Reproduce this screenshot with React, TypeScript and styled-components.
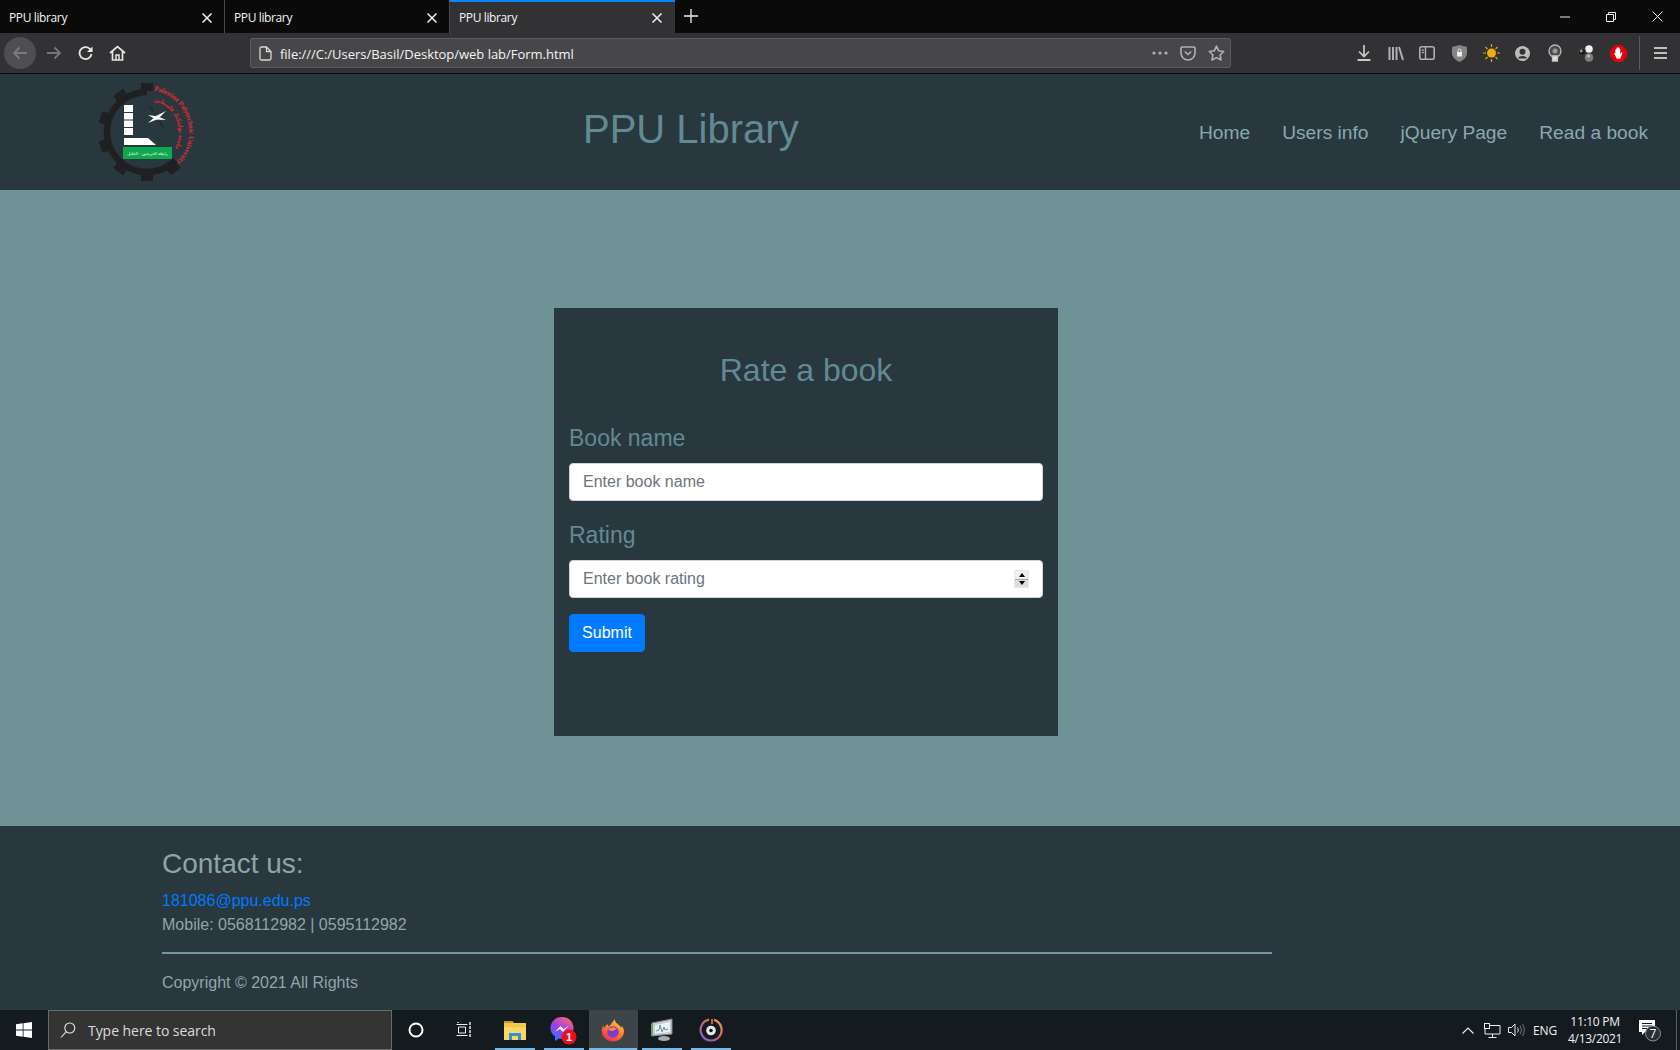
import React from 'react';
import styled, { createGlobalStyle } from 'styled-components';

const Global = createGlobalStyle`
  html, body { margin: 0; padding: 0; height: 100%; background: #6f9297; overflow: hidden; }
  * { box-sizing: border-box; }
`;

const Screen = styled.div`
  width: 1680px; height: 1050px; display: flex; flex-direction: column; overflow: hidden;
  font-family: "Liberation Sans", Arial, sans-serif; font-size: 16px;
`;

/* Browser chrome */
const TabStrip = styled.div`
  height: 33px; flex: none; background: #0a0a0b; display: flex; align-items: stretch;
`;
const Tab = styled.div<{ $active?: boolean; $divider?: boolean }>`
  width: 225px; display: flex; align-items: center; padding: ${p => (p.$active ? '0 13px 0 9px' : '2px 12px 0 9px')};
  color: #f5f5f5; font: 12px "Open Sans", sans-serif; letter-spacing: -0.38px;
  background: ${p => (p.$active ? '#323234' : 'transparent')};
  border-top: ${p => (p.$active ? '2px solid #0a84ff' : 'none')};
  border-right: ${p => (p.$divider ? '1px solid #4a4a4d' : 'none')};
`;
const TabTitle = styled.span`flex: 1; padding-bottom: 1px;`;
const NewTab = styled.div`width: 32px; display: flex; align-items: center; justify-content: center; padding-bottom: 2px;`;
const StripSpacer = styled.div`flex: 1;`;
const WinButton = styled.div`width: 46px; display: flex; align-items: center; justify-content: center;`;

const Toolbar = styled.div`
  height: 41px; flex: none; background: #323234; border-bottom: 1px solid #0c0c0d;
  display: flex; align-items: center; padding-left: 4px;
`;
const BackCircle = styled.div`
  width: 32px; height: 32px; border-radius: 50%; background: #4f4f52; display: flex; align-items: center; justify-content: center;
  margin-right: 1px; flex: none;
`;
const NavSlot = styled.div<{ $wide?: boolean }>`
  width: ${p => (p.$wide ? '33px' : '32px')}; height: 32px; display: flex; align-items: center; justify-content: center; flex: none;
`;
const HomeSlot = styled(NavSlot)`padding-right: 2px;`;
const UrlBar = styled.div`
  margin-left: 116px; width: 981px; height: 30px; background: #474749; border: 1px solid #5c5c5f; border-radius: 2px; flex: none;
  display: flex; align-items: center; padding-left: 8px; color: #f4f4f4; font: 13px "Open Sans", sans-serif;
`;
const UrlText = styled.span`flex: 1; margin-left: 8px; padding-top: 1px; letter-spacing: -0.02px;`;
const UrlIcon = styled.div`width: 28px; display: flex; align-items: center; justify-content: center; flex: none;`;
const ToolIcons = styled.div`margin-left: 117px; display: flex; align-items: center; flex: none;`;
const ToolIcon = styled.div`width: 31.8px; height: 32px; display: flex; align-items: center; justify-content: center; flex: none;`;
const ToolSep = styled.div`width: 1px; height: 34px; background: #5a5a5d; margin: 0 0 0 5px;`;
const MenuSlot = styled.div`width: 40px; display: flex; align-items: center; padding-left: 14px;`;

/* Page header */
const Header = styled.header`
  height: 116px; flex: none; background: #29373f; display: flex; align-items: center; padding: 0 32px 0 98px;
`;
const Logo = styled.svg`width: 100px; height: 100px; flex: none; overflow: visible;`;
const Brand = styled.h1`
  margin: 0 0 0 385px; font-size: 40px; font-weight: 400; line-height: 48px; color: #618a93; padding-bottom: 7px;
`;
const Nav = styled.nav`margin-left: auto; display: flex; gap: 32px;`;
const NavLink = styled.a`font-size: 19.2px; line-height: 29px; color: #8aa9ae; text-decoration: none;`;

/* Main */
const Main = styled.main`
  height: 636px; flex: none; background: #6f9297; padding: 118px 0 0 554px;
`;
const Card = styled.form`
  width: 504px; height: 428px; background: #29373f; padding: 43px 15px 0 15px; margin: 0;
`;
const CardTitle = styled.h2`
  margin: 0 0 31px; font-size: 32px; font-weight: 400; line-height: 38px; text-align: center; color: #618a93;
`;
const Field = styled.div`margin-bottom: 16px;`;
const FieldLabel = styled.label`
  display: block; font-size: 23px; line-height: 35px; color: #618a93; padding-top: 1px; margin-bottom: 7px;
`;
const InputBox = styled.div`
  height: 38px; background: #fff; border: 1px solid #ced4da; border-radius: 4px; display: flex; align-items: center;
  padding: 0 13px 0 13px; color: #6c757d; font-size: 16px; line-height: 24px;
`;
const Placeholder = styled.span`flex: 1;`;
const Spinner = styled.div`
  width: 15px; height: 18px; background: #e4e4e4; border: 1px solid #e9e9e9; display: flex; flex-direction: column;
`;
const SpinPart = styled.div<{ $up?: boolean }>`
  flex: 1; display: flex; align-items: center; justify-content: center; background: ${p => (p.$up ? '#efefef' : '#dedede')};
  border-top: ${p => (p.$up ? 'none' : '1px solid #a8a8a8')};
`;
const Arrow = styled.div<{ $up?: boolean }>`
  width: 0; height: 0; border-left: 3.5px solid transparent; border-right: 3.5px solid transparent;
  ${p => (p.$up ? 'border-bottom: 4px solid #000;' : 'border-top: 4px solid #000;')}
`;
const SubmitButton = styled.button`
  width: 76px; height: 38px; padding: 0; background: #007bff; color: #fff; border: 1px solid #007bff; border-radius: 4px;
  font: 16px "Liberation Sans", Arial, sans-serif; display: block;
`;

/* Footer */
const Footer = styled.footer`
  height: 184px; flex: none; background: #29373f; padding: 21px 0 0 162px; color: #93a6a7;
`;
const FooterInner = styled.div`width: 1110px;`;
const FooterTitle = styled.h3`margin: 0 0 8px; font-size: 28px; font-weight: 400; line-height: 33.6px; color: #8ea5a5;`;
const FooterLine = styled.div`line-height: 24px;`;
const Email = styled.a`color: #007bff; text-decoration: none;`;
const Rule = styled.hr`border: 0; border-top: 2px solid #76989c; margin: 15px 0 17px; height: 0;`;

/* Taskbar */
const Taskbar = styled.div`
  height: 40px; flex: none; background: #141b1f; display: flex; align-items: stretch; color: #f2f2f2;
`;
const StartButton = styled.div`width: 48px; display: flex; align-items: center; justify-content: center;`;
const SearchBox = styled.div`
  width: 344px; background: #343434; border: 1px solid #6a6a6a; display: flex; align-items: center;
  padding-left: 11px; font: 14px "Open Sans", sans-serif; color: #dcdcdc; letter-spacing: -0.05px;
`;
const SearchText = styled.span`margin-left: 12px;`;
const SystemSlot = styled.div`width: 48px; display: flex; align-items: center; justify-content: center; flex: none;`;
const AppGroup = styled.div`display: flex; align-items: stretch; margin-left: 3px;`;
const AppSlot = styled.div<{ $active?: boolean }>`
  width: 49px; flex: none; position: relative; display: flex; align-items: center; justify-content: center;
  padding-right: 2px;
  background: ${p => (p.$active ? '#3e4549' : 'transparent')};
  &::after {
    content: ''; position: absolute; bottom: 0; height: 2px; background: #76b9ed;
    left: ${p => (p.$active ? '0' : '4px')}; right: ${p => (p.$active ? '1px' : '5px')};
  }
`;
const TrayArea = styled.div`margin-left: auto; display: flex; align-items: center; padding-right: 3px;`;
const TrayIcon = styled.div`width: 24px; display: flex; align-items: center; justify-content: center; flex: none;`;
const Lang = styled.div`font: 12px "Open Sans", sans-serif; width: 34px; text-align: center; letter-spacing: -0.2px;`;
const Clock = styled.div`
  width: 54px; text-align: center; font: 12px/17px "Open Sans", sans-serif; margin-left: 6px; letter-spacing: -0.3px; white-space: nowrap;
`;
const Notify = styled.div`width: 40px; margin-left: 8px; display: flex; align-items: center; justify-content: center;`;
const DesktopPeek = styled.div`width: 1px; height: 100%; background: #5b6064; margin-left: 6px;`;

const C = '#b1b1b3';
const GEAR = '#201f22';

const CloseX = ({ c = '#f0f0f0', s = 10 }: { c?: string; s?: number }) => (
  <svg width={s} height={s} viewBox="0 0 10 10"><path d="M.5.5l9 9M9.5.5l-9 9" stroke={c} strokeWidth="1.5" fill="none" /></svg>
);

const LogoMark = () => (
  <Logo viewBox="0 0 100 100">
    <defs>
      <path id="outerArc" d="M56.300 8.600 A42 42 0 0 1 78.700 79.700" />
      <path id="innerArc" d="M55.800 19 A32 32 0 0 1 75.200 68.500" />
    </defs>
    <path d="M77.300 78.300 A40 40 0 1 1 49 10" fill="none" stroke={GEAR} strokeWidth="6.500" />
    {[0, 324, 288, 252, 216, 180, 144].map(a => (
      <rect key={a} x="43" y="1" width="12" height="8" fill={GEAR} transform={`rotate(${a} 49 50)`} />
    ))}
    <text fontSize="6.800" fontFamily="'Liberation Serif', serif" fontWeight="700" fill="#ee2a30">
      <textPath href="#outerArc" textLength="92" lengthAdjust="spacingAndGlyphs">Palestine Polytechnic University</textPath>
    </text>
    <text fontSize="6" fontFamily="'DejaVu Sans', sans-serif" fontWeight="700" fill="#e0262c">
      <textPath href="#innerArc" textLength="60" lengthAdjust="spacingAndGlyphs">جامعة بوليتكنك فلسطين</textPath>
    </text>
    <rect x="26" y="23" width="9" height="7" fill="#fff" />
    <rect x="26" y="31" width="9" height="6.500" fill="#fff" />
    <rect x="26" y="38.500" width="9" height="6.500" fill="#fff" />
    <rect x="26" y="46" width="9" height="7" fill="#fff" />
    <path d="M26 56 H50 L58 63 H26 Z" fill="#fff" />
    <path d="M50 41 L58 34 L68 29 L60 37 Z" fill="#fff" />
    <path d="M50 33 L60 34.500 L68 38 L58 37.500 Z" fill="#fff" />
    <path d="M51 24 l4 4 -2 0 4 4" stroke="#1f2326" strokeWidth="1" fill="none" />
    <path d="M61 39 l3 3 -2 0 4 4" stroke="#1f2326" strokeWidth="1" fill="none" />
    <rect x="25" y="65" width="49" height="12" fill="#0da84f" />
    <text x="49.500" y="72.800" fontSize="4" textAnchor="middle" fontFamily="'DejaVu Sans', sans-serif" fill="#fff">رابطة الخريجين - الخليل</text>
  </Logo>
);

const FirefoxIcon = () => (
  <svg width="24" height="24" viewBox="0 0 24 24">
    <defs>
      <linearGradient id="ff" x1="0.8" y1="0" x2="0.2" y2="1"><stop offset="0" stopColor="#ffd23a" /><stop offset=".5" stopColor="#ff7a2a" /><stop offset="1" stopColor="#f0264f" /></linearGradient>
    </defs>
    <path d="M14 1c-.5 3 2 4.500 4.500 6.500 .5 .5 1 1.500 1.500 2 .5 -.5 .8 -1 .8 -1.500 1.500 2 2.200 3.500 2.200 5 0 6 -5 10.500 -11 10.500S.8 19 .8 13c0 -2 .5 -4 1.700 -5.500 0 1 .5 2 1 2.500 .5 -2 1.500 -3.500 3.500 -3.800 0 1.500 1 2.300 1 2.300L14 1z" fill="url(#ff)" />
    <circle cx="12" cy="14" r="5.800" fill="#7c3bd1" />
    <path d="M7 11.500c2 -2.500 7 -3 9.500 0 -3 -1 -3 1.500 -5 1.500 -1.500 0 -3 -1 -4.500 -1.500z" fill="#ff8a2a" />
  </svg>
);

const MessengerIcon = () => (
  <svg width="30" height="32" viewBox="0 0 30 32">
    <defs>
      <linearGradient id="ms" x1="0.2" y1="1" x2="0.8" y2="0"><stop offset="0" stopColor="#2a7bff" /><stop offset=".5" stopColor="#a33bea" /><stop offset="1" stopColor="#ff6a6a" /></linearGradient>
    </defs>
    <path d="M13 3c6.500 0 11.500 4.800 11.500 11S19.500 25 13 25c-1 0 -2 -.2 -3 -.5L6 27v-4.500C3 20.500 1.500 17.500 1.500 14 1.500 7.800 6.500 3 13 3z" fill="url(#ms)" />
    <path d="M6 18l5.500 -6 3 3 5 -3 -5.500 6 -3 -3z" fill="#fff" />
    <circle cx="20" cy="23" r="7.500" fill="#ef0b1e" />
    <text x="20" y="27" fontSize="11" fontWeight="700" textAnchor="middle" fill="#fff" fontFamily="'Liberation Sans', sans-serif">1</text>
  </svg>
);

const MonitorIcon = () => (
  <svg width="24" height="24" viewBox="0 0 24 24">
    <path d="M2 5 L22 1 V16 L2 18 Z" fill="#c5cbce" stroke="#7f8588" />
    <path d="M5 7 L20 4 V14 L5 15.500 Z" fill="#eef2f5" />
    <path d="M6 13 l3 -1 1 -5 2 7 2 -5 1 3 3 -1" stroke="#5f93b8" fill="none" />
    <path d="M1 6 l2 -1 v13 l-2 0z" fill="#67a860" />
    <ellipse cx="14" cy="20.500" rx="6" ry="2.500" fill="#a8acae" />
  </svg>
);

const MediaIcon = () => (
  <svg width="24" height="24" viewBox="0 0 24 24">
    <defs>
      <linearGradient id="md" x1="0" y1="1" x2="1" y2="0"><stop offset="0" stopColor="#7a5bd8" /><stop offset=".55" stopColor="#c96a6a" /><stop offset="1" stopColor="#f59a3a" /></linearGradient>
    </defs>
    <path d="M15 1.900 A10.500 10.500 0 1 1 10 1.700" fill="none" stroke="url(#md)" strokeWidth="2.200" />
    <path d="M13 1v5" stroke="#e88a4a" strokeWidth="1.500" />
    <circle cx="12" cy="12.500" r="4.800" fill="#e8e8e8" />
    <circle cx="12" cy="12.500" r="1.800" fill="#141414" />
  </svg>
);

export default function App() {
  return (
    <Screen>
      <Global />
      <TabStrip>
        <Tab $divider><TabTitle>PPU library</TabTitle><CloseX /></Tab>
        <Tab $divider><TabTitle>PPU library</TabTitle><CloseX /></Tab>
        <Tab $active><TabTitle>PPU library</TabTitle><CloseX /></Tab>
        <NewTab>
          <svg width="14" height="14" viewBox="0 0 14 14"><path d="M7 0v14M0 7h14" stroke="#f0f0f0" strokeWidth="1.300" /></svg>
        </NewTab>
        <StripSpacer />
        <WinButton><svg width="10" height="2" viewBox="0 0 10 2"><path d="M0 1h10" stroke="#eee" /></svg></WinButton>
        <WinButton>
          <svg width="10" height="10" viewBox="0 0 10 10"><path d="M.5 2.500h7v7h-7zM2.500 2.500v-2h7v7h-2" stroke="#eee" fill="none" /></svg>
        </WinButton>
        <WinButton><svg width="11" height="11" viewBox="0 0 11 11"><path d="M.5.5l10 10M10.500.5l-10 10" stroke="#eee" fill="none" /></svg></WinButton>
      </TabStrip>

      <Toolbar>
        <BackCircle>
          <svg width="16" height="14" viewBox="0 0 16 14"><path d="M15 7H2M7.500 1.500L2 7l5.500 5.500" stroke="#7c7c7e" strokeWidth="1.800" fill="none" /></svg>
        </BackCircle>
        <NavSlot $wide>
          <svg width="16" height="14" viewBox="0 0 16 14"><path d="M1 7h13M8.500 1.500L14 7l-5.500 5.500" stroke="#77777a" strokeWidth="1.800" fill="none" /></svg>
        </NavSlot>
        <NavSlot>
          <svg width="16" height="16" viewBox="0 0 16 16"><path d="M13.500 9a6 6 0 1 1-1.700-5.200L14 6" stroke="#e6e6e7" strokeWidth="1.800" fill="none" /><path d="M14.500 1.500V7H9z" fill="#e6e6e7" /></svg>
        </NavSlot>
        <HomeSlot>
          <svg width="17" height="16" viewBox="0 0 17 16"><path d="M1 8l7.500-6.500L16 8M3.500 6.500V15h10V6.500" stroke="#e6e6e7" strokeWidth="1.700" fill="none" /><path d="M7 15v-5h3v5" stroke="#e6e6e7" strokeWidth="1.500" fill="none" /></svg>
        </HomeSlot>
        <UrlBar>
          <svg width="13" height="15" viewBox="0 0 13 15"><path d="M1 2.500a1.500 1.500 0 0 1 1.500-1.500h5L12 5.500v7a1.500 1.500 0 0 1-1.500 1.500h-8A1.500 1.500 0 0 1 1 12.500zM7.500 1v4.500H12" stroke="#d7d7d8" strokeWidth="1.300" fill="none" /></svg>
          <UrlText>file:///C:/Users/Basil/Desktop/web lab/Form.html</UrlText>
          <UrlIcon>
            <svg width="16" height="4" viewBox="0 0 16 4"><circle cx="2" cy="2" r="1.600" fill={C} /><circle cx="8" cy="2" r="1.600" fill={C} /><circle cx="14" cy="2" r="1.600" fill={C} /></svg>
          </UrlIcon>
          <UrlIcon>
            <svg width="16" height="15" viewBox="0 0 16 15"><path d="M1 2a1 1 0 0 1 1-1h12a1 1 0 0 1 1 1v5a7 7 0 0 1-14 0z" stroke={C} strokeWidth="1.600" fill="none" /><path d="M4.800 5.500L8 8.500l3.200-3" stroke={C} strokeWidth="1.600" fill="none" /></svg>
          </UrlIcon>
          <UrlIcon>
            <svg width="17" height="16" viewBox="0 0 17 16"><path d="M8.500 1.200l2.200 4.600 5 .7-3.600 3.500.9 5-4.500-2.400L4 15l.9-5L1.300 6.500l5-.7z" stroke={C} strokeWidth="1.600" strokeLinejoin="round" fill="none" /></svg>
          </UrlIcon>
        </UrlBar>
        <ToolIcons>
          <ToolIcon>
            <svg width="14" height="16" viewBox="0 0 14 16"><path d="M7 0v11M2 6.500l5 5 5-5" stroke="#c9c9ca" strokeWidth="1.700" fill="none" /><path d="M.5 15h13" stroke="#c9c9ca" strokeWidth="2" /></svg>
          </ToolIcon>
          <ToolIcon>
            <svg width="16" height="15" viewBox="0 0 16 15"><path d="M1.500 1v13M5 1v13M8.500 1v13M11 1l4 13" stroke={C} strokeWidth="2" fill="none" /></svg>
          </ToolIcon>
          <ToolIcon>
            <svg width="16" height="14" viewBox="0 0 16 14"><rect x=".8" y=".8" width="14.400" height="12.400" rx="2" stroke={C} strokeWidth="1.600" fill="none" /><path d="M6.500 1v12M2.800 4h2M2.800 6.500h2" stroke={C} strokeWidth="1.400" /></svg>
          </ToolIcon>
          <ToolIcon>
            <svg width="15" height="17" viewBox="0 0 15 17"><path d="M7.500 0l7.500 2v6c0 4-3 7-7.500 9C3 15 0 12 0 8V2z" fill="#848486" /><rect x="5" y="7" width="5" height="4.500" fill="#eee" /><path d="M6 7V5.500a1.500 1.500 0 0 1 3 0V7" stroke="#eee" fill="none" /></svg>
          </ToolIcon>
          <ToolIcon>
            <svg width="17" height="18" viewBox="0 0 17 18"><circle cx="8.500" cy="9" r="4.500" fill="#f2ac14" /><path d="M8.500 0v3M8.500 15v3M0 9h3M14 9h3M2.500 3l2 2M12.500 13l2 2M14.500 3l-2 2M4.500 13l-2 2" stroke="#e2a21b" strokeWidth="1.200" /></svg>
          </ToolIcon>
          <ToolIcon>
            <svg width="15" height="15" viewBox="0 0 14 14"><circle cx="7" cy="7" r="7" fill="#bcbcbd" /><circle cx="7" cy="5.300" r="2.800" fill="#323234" /><path d="M2.500 11.700a5 4 0 0 1 9 0z" fill="#323234" /></svg>
          </ToolIcon>
          <ToolIcon>
            <svg width="14" height="18" viewBox="0 0 14 18"><path d="M4 12.500C2 11 1 9.500 1 7a6 6 0 0 1 12 0c0 2.500-1 4-3 5.500z" stroke="#b5b5b6" strokeWidth="1.300" fill="#4a4a4c" /><path d="M4.500 12h5v5h-5z" stroke="#c5c5c6" strokeWidth="1.300" fill="#e0e0e0" /><circle cx="7" cy="7" r="2.500" fill="#9a9a9c" /></svg>
          </ToolIcon>
          <ToolIcon>
            <svg width="16" height="17" viewBox="0 0 16 17">
              <circle cx="11" cy="4" r="3.800" fill="#f0f0f0" /><circle cx="11" cy="12.500" r="4.300" fill="#7e7e7e" /><circle cx="10.500" cy="11" r="1.600" fill="#c0c0c0" />
              <circle cx="4" cy="7" r="3.700" fill="#1b1b1c" stroke="#555" strokeWidth=".6" /><circle cx="3.300" cy="6" r="1.400" fill="#a5a5a5" />
            </svg>
          </ToolIcon>
          <ToolIcon>
            <svg width="17" height="17" viewBox="0 0 16 16"><path d="M5 0h6l5 5v6l-5 5H5l-5-5V5z" fill="#e3000f" /><path d="M3.800 7.800L5 7.500V4.500a.6.6 0 0 1 1.100 0V7V2.900a.6.6 0 0 1 1.200 0V7V2.600a.6.6 0 0 1 1.200 0V7V3.500a.6.6 0 0 1 1.100 0V8.500l1-1.500a.6.6 0 0 1 1 .6L9.700 13H6.500z" fill="#fff" /></svg>
          </ToolIcon>
          <ToolSep />
          <MenuSlot>
            <svg width="13" height="12" viewBox="0 0 13 12"><path d="M0 1h13M0 6h13M0 11h13" stroke="#c0c0c1" strokeWidth="2" /></svg>
          </MenuSlot>
        </ToolIcons>
      </Toolbar>

      <Header>
        <LogoMark />
        <Brand>PPU Library</Brand>
        <Nav>
          <NavLink>Home</NavLink>
          <NavLink>Users info</NavLink>
          <NavLink>jQuery Page</NavLink>
          <NavLink>Read a book</NavLink>
        </Nav>
      </Header>

      <Main>
        <Card>
          <CardTitle>Rate a book</CardTitle>
          <Field>
            <FieldLabel>Book name</FieldLabel>
            <InputBox><Placeholder>Enter book name</Placeholder></InputBox>
          </Field>
          <Field>
            <FieldLabel>Rating</FieldLabel>
            <InputBox>
              <Placeholder>Enter book rating</Placeholder>
              <Spinner>
                <SpinPart $up><Arrow $up /></SpinPart>
                <SpinPart><Arrow /></SpinPart>
              </Spinner>
            </InputBox>
          </Field>
          <SubmitButton type="button">Submit</SubmitButton>
        </Card>
      </Main>

      <Footer>
        <FooterInner>
          <FooterTitle>Contact us:</FooterTitle>
          <FooterLine><Email>181086@ppu.edu.ps</Email></FooterLine>
          <FooterLine>Mobile: 0568112982 | 0595112982</FooterLine>
          <Rule />
          <FooterLine>Copyright © 2021 All Rights</FooterLine>
        </FooterInner>
      </Footer>

      <Taskbar>
        <StartButton>
          <svg width="16" height="16" viewBox="0 0 16 16"><path d="M0 2.300L6.700 1.300V7.600H0zM7.500 1.200L16 0V7.600H7.500zM0 8.400H6.700V14.700L0 13.700zM7.500 8.400H16V16L7.500 14.800z" fill="#fff" /></svg>
        </StartButton>
        <SearchBox>
          <svg width="16" height="16" viewBox="0 0 16 16"><circle cx="9.800" cy="6" r="5" stroke="#e8e8e8" fill="none" strokeWidth="1.100" /><path d="M6.300 9.700L1 15.500" stroke="#e8e8e8" strokeWidth="1.100" /></svg>
          <SearchText>Type here to search</SearchText>
        </SearchBox>
        <SystemSlot>
          <svg width="16" height="16" viewBox="0 0 16 16"><circle cx="8" cy="8" r="6.500" stroke="#fff" strokeWidth="2" fill="none" /></svg>
        </SystemSlot>
        <SystemSlot>
          <svg width="16" height="16" viewBox="0 0 16 16"><path d="M.5 2.500h11M.5 13.500h11M2.500 5h7v6h-7z" stroke="#eee" fill="none" /><path d="M14 0v16M2 0v1" stroke="#eee" strokeWidth="1.400" strokeDasharray="3 1" /></svg>
        </SystemSlot>
        <AppGroup>
          <AppSlot>
            <svg width="22" height="19" viewBox="0 0 22 19"><path d="M0 0h8l2 2h12v17H0z" fill="#f6c545" /><path d="M0 0h8l2 2H0z" fill="#c9962a" /><path d="M0 6h22v13H0z" fill="#fcd767" /><path d="M5 19v-7h12v7h-3v-4H8v4z" fill="#2f8fd8" /></svg>
          </AppSlot>
          <AppSlot><MessengerIcon /></AppSlot>
          <AppSlot $active><FirefoxIcon /></AppSlot>
          <AppSlot><MonitorIcon /></AppSlot>
          <AppSlot><MediaIcon /></AppSlot>
        </AppGroup>
        <TrayArea>
          <TrayIcon>
            <svg width="12" height="7" viewBox="0 0 12 7"><path d="M.5 6.500L6 1l5.500 5.500" stroke="#eee" strokeWidth="1.100" fill="none" /></svg>
          </TrayIcon>
          <TrayIcon>
            <svg width="17" height="15" viewBox="0 0 17 15"><path d="M1 2.500h15v8.500H1zM8.500 11v3M4.500 14.500h8" stroke="#eee" fill="none" /><rect x=".5" y=".5" width="5" height="5" fill="#141b1f" stroke="#eee" /></svg>
          </TrayIcon>
          <TrayIcon>
            <svg width="17" height="14" viewBox="0 0 17 14"><path d="M.5 4.500h3L7 1v12L3.500 9.500h-3z" stroke="#eee" fill="none" /><path d="M9.500 4.500c1 1.500 1 3.500 0 5" stroke="#ddd" fill="none" /><path d="M12 2.500c1.800 2.500 1.800 6.500 0 9M14.500 1c2.300 3.500 2.300 8.500 0 12" stroke="#777" fill="none" /></svg>
          </TrayIcon>
          <Lang>ENG</Lang>
          <Clock>11:10 PM<br />4/13/2021</Clock>
          <Notify>
            <svg width="24" height="24" viewBox="0 0 24 24">
              <path d="M1 2h16v12H7l-3 3v-3H1z" fill="#fff" />
              <path d="M4 5.500h10M4 8h10M4 10.500h10" stroke="#141b1f" />
              <circle cx="15" cy="15.500" r="7.500" fill="#2a2f33" stroke="#8a8f92" />
              <text x="15" y="19.500" fontSize="12" textAnchor="middle" fill="#fff" fontFamily="'Open Sans', sans-serif">7</text>
            </svg>
          </Notify>
          <DesktopPeek />
        </TrayArea>
      </Taskbar>
    </Screen>
  );
}
